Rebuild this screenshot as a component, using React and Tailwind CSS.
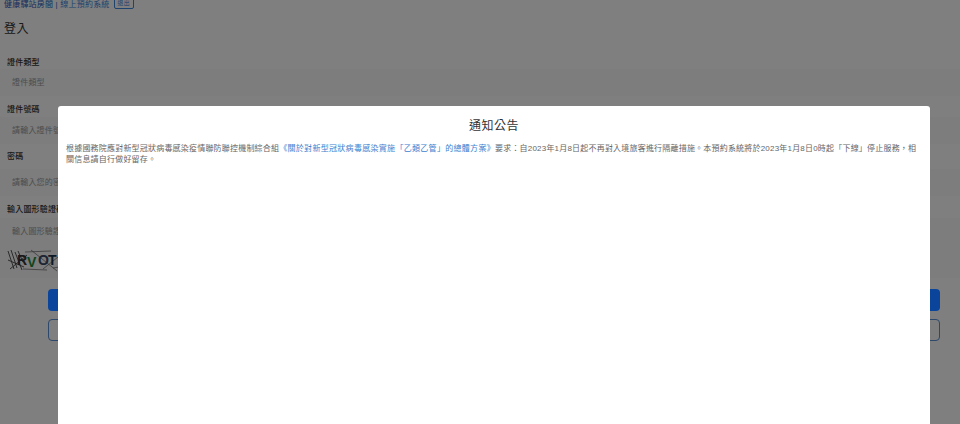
const fontStack = { fontFamily: '"Liberation Sans", "Noto Sans CJK TC", sans-serif' };

const fields = [
  { label: "證件類型", hint: "證件類型", top: "mt-[20px]", gap: "mt-[1px]" },
  { label: "證件號碼", hint: "請輸入證件號碼", top: "mt-[9px]", gap: "mt-[2px]" },
  { label: "密碼", hint: "請輸入您的密碼", top: "mt-[8px]", gap: "mt-[7px]" },
  { label: "輸入圖形驗證碼", hint: "輸入圖形驗證碼", top: "mt-[9px]", gap: "mt-[3px]" },
];

const Captcha = () => (
  <svg width="58" height="24" viewBox="0 0 58 24" className="block ml-[7px]">
    <path d="M1 3 L7 21 M4 2 L10 20 M8 4 L15 22 M1 12 L17 19 M3 21 L20 7 M11 3 L16 14" stroke="#444" strokeWidth="0.9" fill="none" />
    <path d="M16 21 L40 22 M24 2 L50 23 M36 21 L56 5 M18 4 L44 3 M46 20 L58 18" stroke="#666" strokeWidth="0.7" fill="none" />
    <text x="10" y="17" fontSize="14" fontWeight="700" fill="#333">R</text>
    <text x="20" y="19" fontSize="14" fontWeight="700" fill="#1f8a3a">V</text>
    <text x="31" y="17" fontSize="14" fontWeight="700" fill="#3a4a66">O</text>
    <text x="41" y="17" fontSize="14" fontWeight="700" fill="#1d3550">T</text>
  </svg>
);

const App = () => {
  return (
    <div style={fontStack} className="relative w-[960px] h-[424px] overflow-hidden bg-white">
      {/* Login page behind the dialog */}
      <div className="h-[10px] px-1 flex items-center gap-1 text-[8px] leading-[10px] tracking-[0.2px] text-[#1e5fc0]">
        <span>
          健康驛站房間 | <span className="text-[#3a86dc]">線上預約系統</span>
        </span>
        <span className="h-[11px] -mt-[4px] px-[3px] flex items-center border border-[#3a86dc] rounded-[2px] text-[6px] leading-[8px] text-[#3a86dc]">
          退出
        </span>
      </div>
      <h1 className="mt-[10px] px-1 text-[12px] leading-[18px] tracking-[0.5px] text-[#333]">登入</h1>

      {fields.map((f) => (
        <div key={f.label} className={f.top}>
          <p className="px-[7px] text-[8px] leading-[10px] tracking-[0.2px] text-[#333] font-medium">{f.label}</p>
          <div className={`${f.gap} h-[27px] pl-3 flex items-center bg-[#fafafa] text-[8px] tracking-[0.2px] text-[#999]`}>
            {f.hint}
          </div>
        </div>
      ))}

      <div className="pt-[3px] h-[33px] bg-[#fafafa]">
        <Captcha />
      </div>

      <div className="mt-[11px] pl-12 pr-5 flex flex-col gap-2">
        <button className="relative z-20 h-[22px] rounded-[4px] bg-[#0a459b]" />
        <button className="h-[22px] rounded-[4px] border border-[#5a90d4]" />
      </div>

      {/* Overlay + notice dialog */}
      <div className="absolute inset-0 z-10 bg-black/50" />
      <div className="absolute z-30 left-[58px] top-[106px] w-[872px] h-[340px] bg-white rounded-[3px] px-2">
        <h2 className="pt-3 text-center text-[12px] leading-4 tracking-[0.5px] text-[#333]">通知公告</h2>
        <p className="mt-[9px] text-[8px] leading-[11px] tracking-[0.2px] text-[#666]">
          根據國務院應對新型冠狀病毒感染疫情聯防聯控機制綜合組
          <span className="tracking-[0.3px] text-[#3d7fd0]">《關於對新型冠狀病毒感染實施「乙類乙管」的總體方案》</span>
          要求：自2023年1月8日起不再對入境旅客進行隔離措施。本預約系統將於2023年1月8日0時起「下線」停止服務，相關信息請自行做好留存。
        </p>
      </div>
    </div>
  );
};

export default App;
